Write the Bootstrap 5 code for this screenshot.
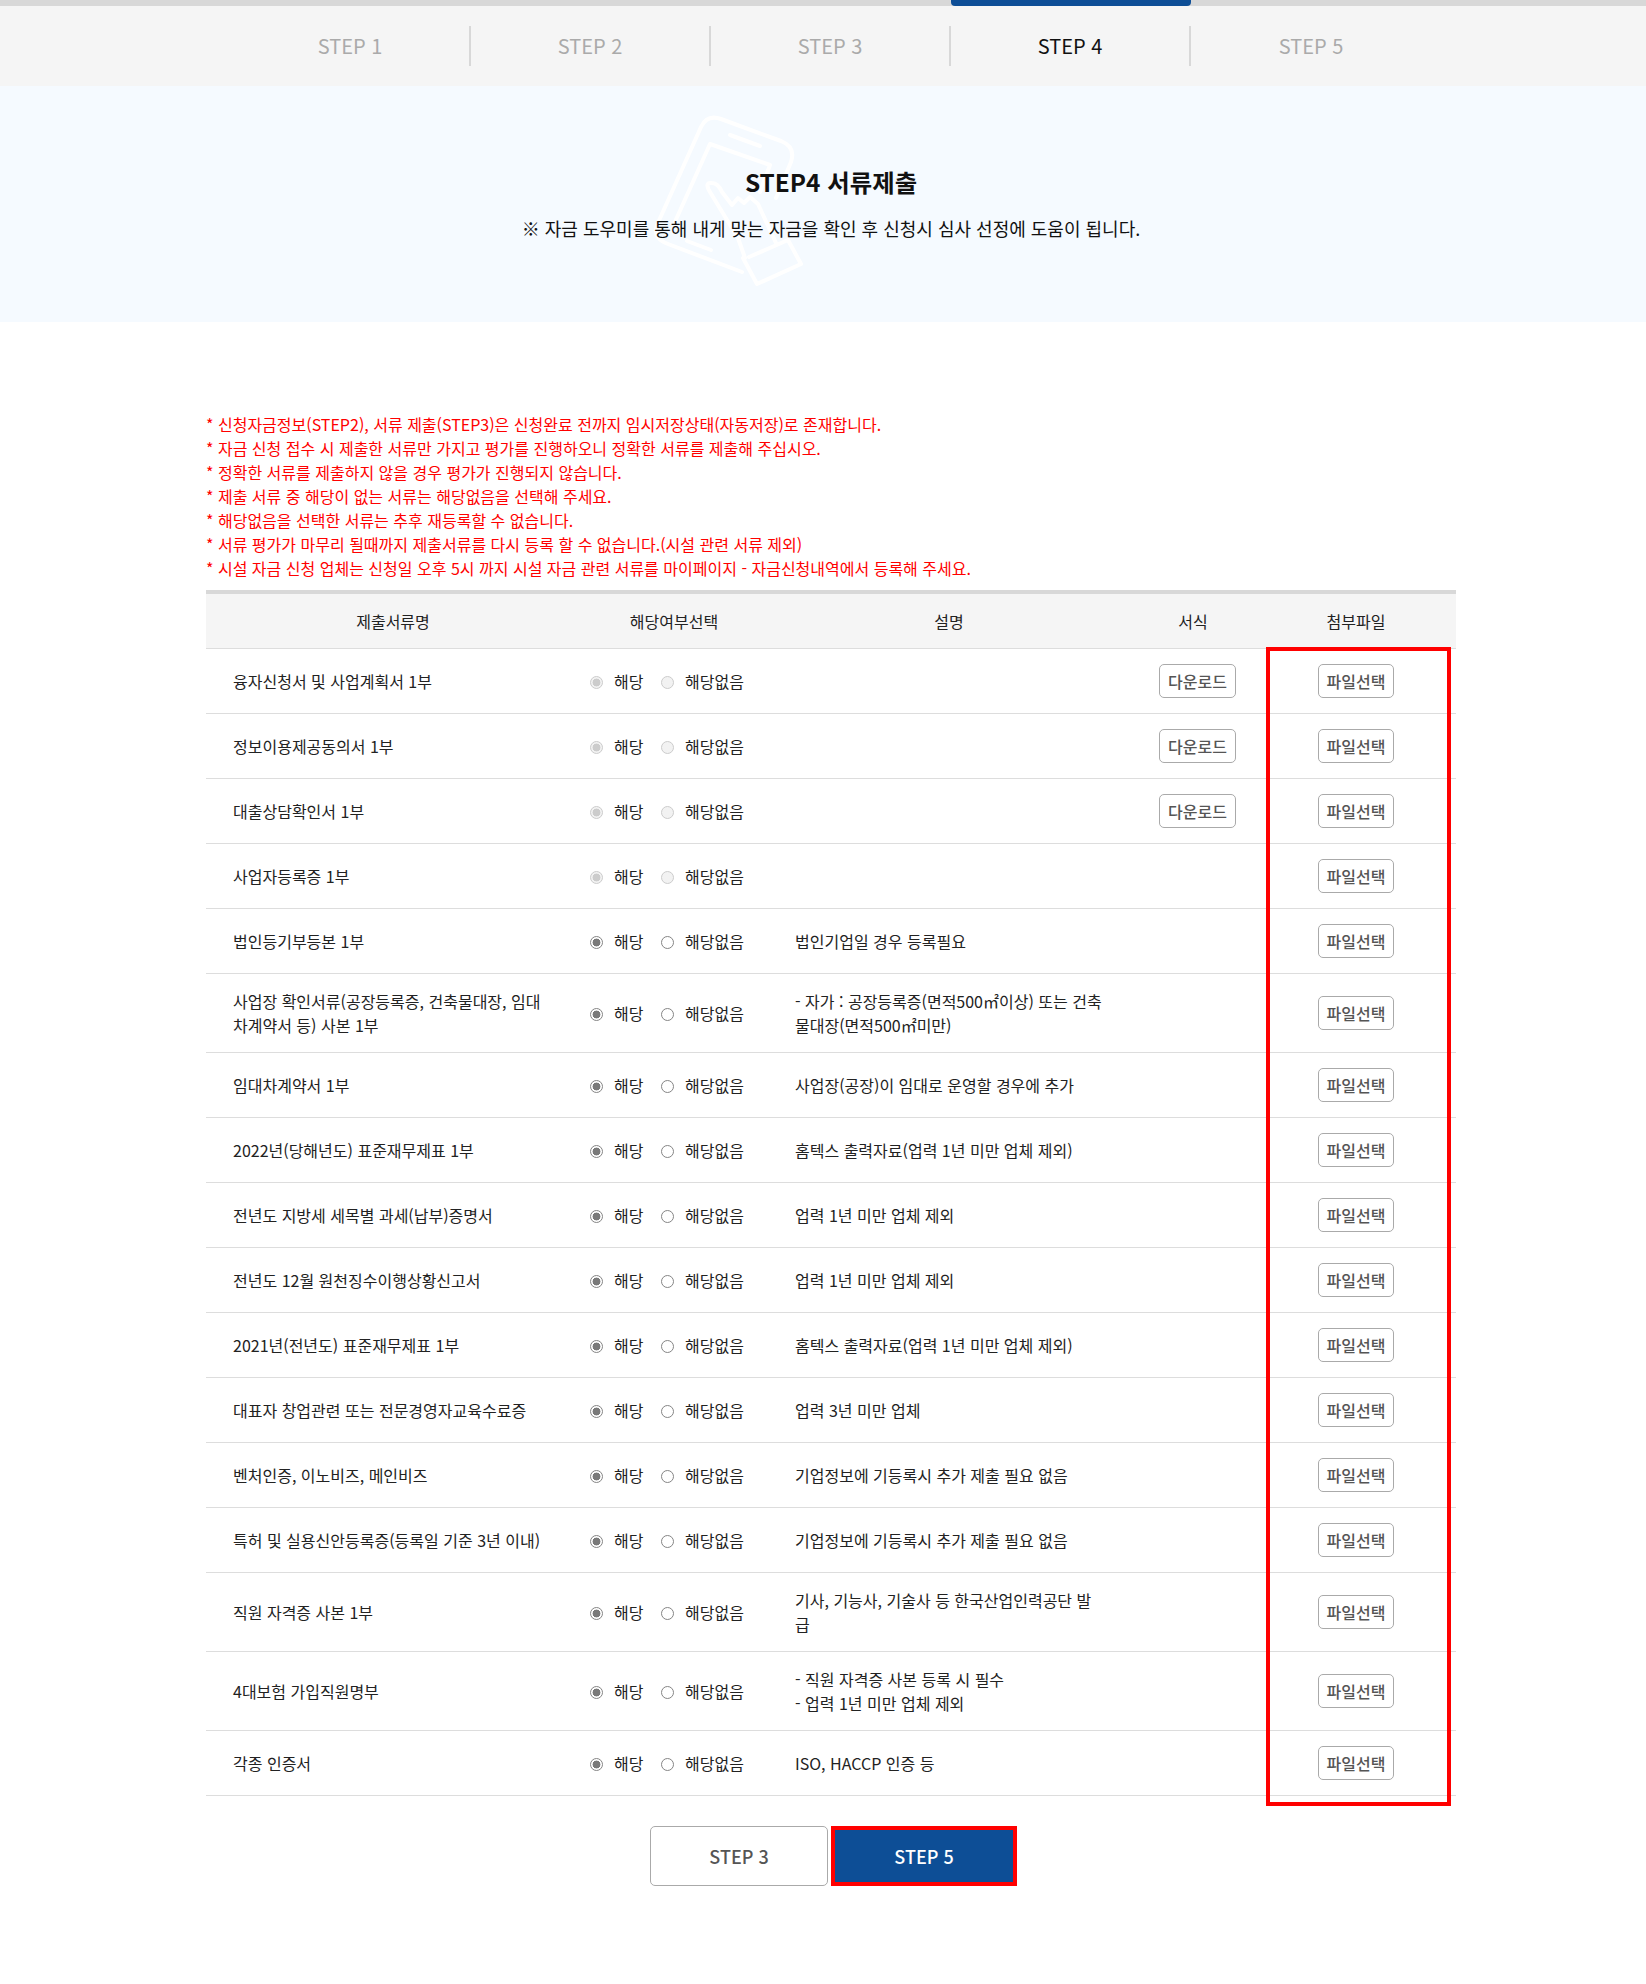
<!DOCTYPE html>
<html lang="ko">
<head>
<meta charset="utf-8">
<title>STEP4 서류제출</title>
<link href="https://cdn.jsdelivr.net/npm/bootstrap@5.3.0/dist/css/bootstrap.min.css" rel="stylesheet">
<style>
body{font-family:"Noto Sans CJK KR","Noto Sans",sans-serif;font-size:16px;color:#222;background:#fff}
.progress-track{height:6px;background:#d8d8d8;width:100%}
.progress-fill{width:240px;height:6px;background:#0d4e96;margin-left:951px;border-radius:0 0 4px 4px}
.step-bar{height:80px;background:#f5f5f5;padding:20px 0 0 231px}
.step-item{width:240px;height:40px;font-size:20px;line-height:40px;color:#aaa;text-align:center;border-right:2px solid #d8d8d8}
.step-item:last-child{border-right:0}
.step-item.on{color:#111}
.hero{height:236px;background:#f5faff;position:relative;text-align:center;padding:78px 0 0 16px}
.hero-art{position:absolute;left:630px;top:14px;width:200px;height:200px}
.hero h2{position:relative;font-size:24.4px;line-height:36px;font-weight:700;color:#111;margin:0 0 10px}
.hero p{position:relative;font-size:18px;line-height:36px;color:#111;margin:0}
.page-wrap{width:1250px;margin-left:206px;padding-top:90px;position:relative}
.notes{color:#f00;font-size:16px;line-height:24px;margin-bottom:10px}
.doc-table{table-layout:fixed;width:1250px;border-collapse:separate;border-spacing:0;border-top:4px solid #d8d8d8;margin:0;--bs-table-color:#222}
.doc-table th{background:#f5f5f5;font-weight:400;text-align:center;height:55px;padding:0;border-bottom:1px solid #ddd;vertical-align:middle}
.doc-table td{height:65px;padding:15px 27px;line-height:24px;border-bottom:1px solid #ddd;vertical-align:middle}
.doc-table td.c-radio,.doc-table td.c-form,.doc-table td.c-file{padding:0;text-align:left}
.doc-table td.c-form{padding-left:29px}
.doc-table td.c-file{text-align:center}
.radio-set{display:flex;align-items:center;padding-left:10px}
.radio-set .form-check-input{width:13px;height:13px;margin:2px 0 0;border:1px solid #858585;background-color:#fff;flex:none;opacity:1}
.radio-set .form-check-input:checked{background-color:#fff;border-color:#858585;background-image:radial-gradient(circle,#7a7a7a 0 3.7px,transparent 4.2px)}
.radio-set .form-check-input:disabled{border-color:#ccc;background-color:#f2f2f2;opacity:1}
.radio-set .form-check-input:disabled:checked{border-color:#ccc;background-color:#f2f2f2;background-image:radial-gradient(circle,#ccc 0 3.7px,transparent 4.2px)}
.radio-set label{margin:0 0 0 11px;opacity:1!important;color:#222}
.radio-set label.lab-yes{width:47px}
.doc-btn{--bs-btn-padding-x:8px;--bs-btn-padding-y:0;font-size:16px;font-weight:500;line-height:32px;height:34px;border:1px solid #aaa;border-radius:5px;color:#555;background:#fff}
.red-frame{position:absolute;left:1060px;top:325px;width:185px;height:1159px;border:4px solid #f00;pointer-events:none}
.foot-btns{padding:30px 0 98px 5px;gap:3px;align-items:center}
.big-btn{width:178px;height:60px;font-size:18px;font-weight:500;border-radius:5px;padding:0;display:flex;align-items:center;justify-content:center}
.big-prev{border:1px solid #aaa;color:#555;background:#fff}
.big-next{width:186px;background:#0d4e96;color:#fff;border:4px solid #f00;border-radius:0}
</style>
</head>
<body>
<div class="progress-track"><div class="progress-fill"></div></div>
<div class="step-bar d-flex align-items-start">
  <div class="step-item">STEP 1</div><div class="step-item">STEP 2</div><div class="step-item">STEP 3</div><div class="step-item on">STEP 4</div><div class="step-item">STEP 5</div>
</div>
<section class="hero">
  <svg class="hero-art" viewBox="0 0 200 200" fill="none" stroke="#fff" stroke-width="4" stroke-linecap="round" stroke-linejoin="round" aria-hidden="true">
    <path d="M112 172 L38 144 Q22 138 27 125 L71 27 Q77 14 91 19 L151 41 Q166 47 161 62 L146 98"/>
    <path d="M44 124 L80 44 L140 65 L130 92"/>
    <path d="M100 35 L130 46"/>
    <path d="M57 141 L81 150"/>
    <path d="M115 158 L108 138 L80 92 Q74 82 82 83 Q88 83 92 92 L102 105 L108 98 L114 103 L120 97 L128 104 L146 143"/>
    <path d="M113 158 L127 184 L171 164 L158 140 L119 157"/>
  </svg>
  <h2>STEP4 서류제출</h2>
  <p>※ 자금 도우미를 통해 내게 맞는 자금을 확인 후 신청시 심사 선정에 도움이 됩니다.</p>
</section>
<main class="page-wrap">
  <div class="notes">
    <div>* 신청자금정보(STEP2), 서류 제출(STEP3)은 신청완료 전까지 임시저장상태(자동저장)로 존재합니다.</div>
    <div>* 자금 신청 접수 시 제출한 서류만 가지고 평가를 진행하오니 정확한 서류를 제출해 주십시오.</div>
    <div>* 정확한 서류를 제출하지 않을 경우 평가가 진행되지 않습니다.</div>
    <div>* 제출 서류 중 해당이 없는 서류는 해당없음을 선택해 주세요.</div>
    <div>* 해당없음을 선택한 서류는 추후 재등록할 수 없습니다.</div>
    <div>* 서류 평가가 마무리 될때까지 제출서류를 다시 등록 할 수 없습니다.(시설 관련 서류 제외)</div>
    <div>* 시설 자금 신청 업체는 신청일 오후 5시 까지 시설 자금 관련 서류를 마이페이지 - 자금신청내역에서 등록해 주세요.</div>
  </div>
  <table class="table doc-table">
    <colgroup><col style="width:374px"><col style="width:188px"><col style="width:362px"><col style="width:126px"><col style="width:200px"></colgroup>
    <thead><tr><th>제출서류명</th><th>해당여부선택</th><th>설명</th><th>서식</th><th>첨부파일</th></tr></thead>
    <tbody>
<tr><td>융자신청서 및 사업계획서 1부</td><td class="c-radio"><div class="radio-set"><input class="form-check-input" type="radio" name="r1" id="r1a" checked disabled><label class="lab-yes" for="r1a">해당</label><input class="form-check-input" type="radio" name="r1" id="r1b" disabled><label for="r1b">해당없음</label></div></td><td></td><td class="c-form"><button type="button" class="btn doc-btn">다운로드</button></td><td class="c-file"><button type="button" class="btn doc-btn">파일선택</button></td></tr>
<tr><td>정보이용제공동의서 1부</td><td class="c-radio"><div class="radio-set"><input class="form-check-input" type="radio" name="r2" id="r2a" checked disabled><label class="lab-yes" for="r2a">해당</label><input class="form-check-input" type="radio" name="r2" id="r2b" disabled><label for="r2b">해당없음</label></div></td><td></td><td class="c-form"><button type="button" class="btn doc-btn">다운로드</button></td><td class="c-file"><button type="button" class="btn doc-btn">파일선택</button></td></tr>
<tr><td>대출상담확인서 1부</td><td class="c-radio"><div class="radio-set"><input class="form-check-input" type="radio" name="r3" id="r3a" checked disabled><label class="lab-yes" for="r3a">해당</label><input class="form-check-input" type="radio" name="r3" id="r3b" disabled><label for="r3b">해당없음</label></div></td><td></td><td class="c-form"><button type="button" class="btn doc-btn">다운로드</button></td><td class="c-file"><button type="button" class="btn doc-btn">파일선택</button></td></tr>
<tr><td>사업자등록증 1부</td><td class="c-radio"><div class="radio-set"><input class="form-check-input" type="radio" name="r4" id="r4a" checked disabled><label class="lab-yes" for="r4a">해당</label><input class="form-check-input" type="radio" name="r4" id="r4b" disabled><label for="r4b">해당없음</label></div></td><td></td><td class="c-form"></td><td class="c-file"><button type="button" class="btn doc-btn">파일선택</button></td></tr>
<tr><td>법인등기부등본 1부</td><td class="c-radio"><div class="radio-set"><input class="form-check-input" type="radio" name="r5" id="r5a" checked><label class="lab-yes" for="r5a">해당</label><input class="form-check-input" type="radio" name="r5" id="r5b"><label for="r5b">해당없음</label></div></td><td>법인기업일 경우 등록필요</td><td class="c-form"></td><td class="c-file"><button type="button" class="btn doc-btn">파일선택</button></td></tr>
<tr><td>사업장 확인서류(공장등록증, 건축물대장, 임대차계약서 등) 사본 1부</td><td class="c-radio"><div class="radio-set"><input class="form-check-input" type="radio" name="r6" id="r6a" checked><label class="lab-yes" for="r6a">해당</label><input class="form-check-input" type="radio" name="r6" id="r6b"><label for="r6b">해당없음</label></div></td><td>- 자가 : 공장등록증(면적500㎡이상) 또는 건축물대장(면적500㎡미만)</td><td class="c-form"></td><td class="c-file"><button type="button" class="btn doc-btn">파일선택</button></td></tr>
<tr><td>임대차계약서 1부</td><td class="c-radio"><div class="radio-set"><input class="form-check-input" type="radio" name="r7" id="r7a" checked><label class="lab-yes" for="r7a">해당</label><input class="form-check-input" type="radio" name="r7" id="r7b"><label for="r7b">해당없음</label></div></td><td>사업장(공장)이 임대로 운영할 경우에 추가</td><td class="c-form"></td><td class="c-file"><button type="button" class="btn doc-btn">파일선택</button></td></tr>
<tr><td>2022년(당해년도) 표준재무제표 1부</td><td class="c-radio"><div class="radio-set"><input class="form-check-input" type="radio" name="r8" id="r8a" checked><label class="lab-yes" for="r8a">해당</label><input class="form-check-input" type="radio" name="r8" id="r8b"><label for="r8b">해당없음</label></div></td><td>홈텍스 출력자료(업력 1년 미만 업체 제외)</td><td class="c-form"></td><td class="c-file"><button type="button" class="btn doc-btn">파일선택</button></td></tr>
<tr><td>전년도 지방세 세목별 과세(납부)증명서</td><td class="c-radio"><div class="radio-set"><input class="form-check-input" type="radio" name="r9" id="r9a" checked><label class="lab-yes" for="r9a">해당</label><input class="form-check-input" type="radio" name="r9" id="r9b"><label for="r9b">해당없음</label></div></td><td>업력 1년 미만 업체 제외</td><td class="c-form"></td><td class="c-file"><button type="button" class="btn doc-btn">파일선택</button></td></tr>
<tr><td>전년도 12월 원천징수이행상황신고서</td><td class="c-radio"><div class="radio-set"><input class="form-check-input" type="radio" name="r10" id="r10a" checked><label class="lab-yes" for="r10a">해당</label><input class="form-check-input" type="radio" name="r10" id="r10b"><label for="r10b">해당없음</label></div></td><td>업력 1년 미만 업체 제외</td><td class="c-form"></td><td class="c-file"><button type="button" class="btn doc-btn">파일선택</button></td></tr>
<tr><td>2021년(전년도) 표준재무제표 1부</td><td class="c-radio"><div class="radio-set"><input class="form-check-input" type="radio" name="r11" id="r11a" checked><label class="lab-yes" for="r11a">해당</label><input class="form-check-input" type="radio" name="r11" id="r11b"><label for="r11b">해당없음</label></div></td><td>홈텍스 출력자료(업력 1년 미만 업체 제외)</td><td class="c-form"></td><td class="c-file"><button type="button" class="btn doc-btn">파일선택</button></td></tr>
<tr><td>대표자 창업관련 또는 전문경영자교육수료증</td><td class="c-radio"><div class="radio-set"><input class="form-check-input" type="radio" name="r12" id="r12a" checked><label class="lab-yes" for="r12a">해당</label><input class="form-check-input" type="radio" name="r12" id="r12b"><label for="r12b">해당없음</label></div></td><td>업력 3년 미만 업체</td><td class="c-form"></td><td class="c-file"><button type="button" class="btn doc-btn">파일선택</button></td></tr>
<tr><td>벤처인증, 이노비즈, 메인비즈</td><td class="c-radio"><div class="radio-set"><input class="form-check-input" type="radio" name="r13" id="r13a" checked><label class="lab-yes" for="r13a">해당</label><input class="form-check-input" type="radio" name="r13" id="r13b"><label for="r13b">해당없음</label></div></td><td>기업정보에 기등록시 추가 제출 필요 없음</td><td class="c-form"></td><td class="c-file"><button type="button" class="btn doc-btn">파일선택</button></td></tr>
<tr><td>특허 및 실용신안등록증(등록일 기준 3년 이내)</td><td class="c-radio"><div class="radio-set"><input class="form-check-input" type="radio" name="r14" id="r14a" checked><label class="lab-yes" for="r14a">해당</label><input class="form-check-input" type="radio" name="r14" id="r14b"><label for="r14b">해당없음</label></div></td><td>기업정보에 기등록시 추가 제출 필요 없음</td><td class="c-form"></td><td class="c-file"><button type="button" class="btn doc-btn">파일선택</button></td></tr>
<tr><td>직원 자격증 사본 1부</td><td class="c-radio"><div class="radio-set"><input class="form-check-input" type="radio" name="r15" id="r15a" checked><label class="lab-yes" for="r15a">해당</label><input class="form-check-input" type="radio" name="r15" id="r15b"><label for="r15b">해당없음</label></div></td><td>기사, 기능사, 기술사 등 한국산업인력공단 발급</td><td class="c-form"></td><td class="c-file"><button type="button" class="btn doc-btn">파일선택</button></td></tr>
<tr><td>4대보험 가입직원명부</td><td class="c-radio"><div class="radio-set"><input class="form-check-input" type="radio" name="r16" id="r16a" checked><label class="lab-yes" for="r16a">해당</label><input class="form-check-input" type="radio" name="r16" id="r16b"><label for="r16b">해당없음</label></div></td><td>- 직원 자격증 사본 등록 시 필수<br>- 업력 1년 미만 업체 제외</td><td class="c-form"></td><td class="c-file"><button type="button" class="btn doc-btn">파일선택</button></td></tr>
<tr><td>각종 인증서</td><td class="c-radio"><div class="radio-set"><input class="form-check-input" type="radio" name="r17" id="r17a" checked><label class="lab-yes" for="r17a">해당</label><input class="form-check-input" type="radio" name="r17" id="r17b"><label for="r17b">해당없음</label></div></td><td>ISO, HACCP 인증 등</td><td class="c-form"></td><td class="c-file"><button type="button" class="btn doc-btn">파일선택</button></td></tr>
    </tbody>
  </table>
  <div class="red-frame"></div>
  <div class="d-flex justify-content-center foot-btns">
    <a class="btn big-btn big-prev" href="#">STEP 3</a>
    <a class="btn big-btn big-next" href="#">STEP 5</a>
  </div>
</main>
</body>
</html>
